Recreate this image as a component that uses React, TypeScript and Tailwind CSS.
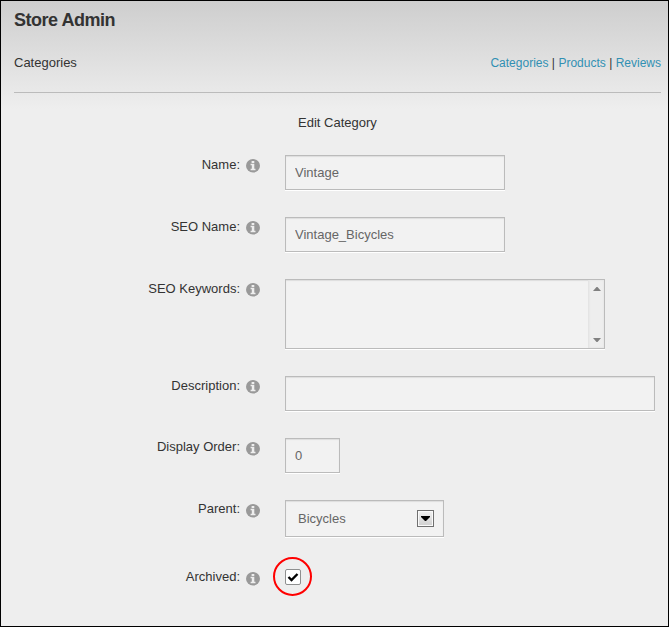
import type { ReactNode } from "react";

function InfoIcon() {
  return (
    <svg width="14" height="14" viewBox="0 0 14 14" className="block shrink-0">
      <ellipse cx="7" cy="6.8" rx="7" ry="6.7" fill="#999" />
      <path d="M5.6 1.9h2.7v2H5.6z M4.6 4.8h3.7v5h1.2v1.5H4.6V9.8h1.2V6.3H4.6z" fill="#eee" />
    </svg>
  );
}

type RowProps = { label: string; labelClass: string; rowClass: string; children: ReactNode };

function Row({ label, labelClass, rowClass, children }: RowProps) {
  return (
    <div className={`flex items-start ${rowClass}`}>
      <div className="flex w-[259px] justify-end">
        <span className={`mr-[6px] whitespace-nowrap leading-[16px] ${labelClass}`}>{label}</span>
        <div className="mt-[4px]">
          <InfoIcon />
        </div>
      </div>
      <div className="ml-[25px]">{children}</div>
    </div>
  );
}

const field =
  "block border border-[#bbb] bg-[#f2f2f2] text-[13px] text-[#666] outline-none shadow-[0_1px_0_#fff,inset_0_1px_1px_#ddd]";

export default function App() {
  return (
    <div className="h-[627px] w-[669px] overflow-hidden border border-black bg-[#eee] bg-[linear-gradient(to_bottom,#cecece_0px,#eee_108px)] font-['Liberation_Sans',Arial,sans-serif] text-[13px] text-[#333]">
      <header className="mr-[7px] ml-[13px] flex h-[92px] flex-col border-b border-[#bbb]">
        <h1 className="mt-[8px] text-[18px] leading-[22px] font-bold tracking-[-0.48px]">Store Admin</h1>
        <div className="mt-[24px] flex justify-between leading-[16px]">
          <span>Categories</span>
          <nav className="flex gap-[3.4px] text-[12px] text-[#3190b3]">
            <a>Categories</a>
            <span className="text-[#333]">|</span>
            <a>Products</a>
            <span className="text-[#333]">|</span>
            <a>Reviews</a>
          </nav>
        </div>
      </header>
      <main>
        <h2 className="mt-[22px] ml-[297px] leading-[16px]">Edit Category</h2>
        <Row label="Name:" labelClass="mt-[2px]" rowClass="mt-[24px] h-[62px]">
          <input className={`${field} h-[35px] w-[220px] px-[9px]`} defaultValue="Vintage" />
        </Row>
        <Row label="SEO Name:" labelClass="mt-[2px]" rowClass="h-[62px]">
          <input className={`${field} h-[35px] w-[220px] px-[9px]`} defaultValue="Vintage_Bicycles" />
        </Row>
        <Row label="SEO Keywords:" labelClass="mt-[2px]" rowClass="h-[97px]">
          <div className={`${field} flex h-[70px] w-[320px]`}>
            <textarea className="min-w-0 flex-1 resize-none overflow-hidden outline-none" />
            <div className="flex w-[16px] flex-col items-center justify-between border-l border-[#e4e4e4] bg-[#eee] pt-[7px] pb-[6px] shadow-[inset_0_0_2px_#ddd]">
              <svg width="8" height="4" viewBox="0 0 8 4" className="block">
                <path d="M3.5 0h1L8 4H0z" fill="#808080" />
              </svg>
              <svg width="8" height="4" viewBox="0 0 8 4" className="block">
                <path d="M0 0H8L4.5 4h-1z" fill="#808080" />
              </svg>
            </div>
          </div>
        </Row>
        <Row label="Description:" labelClass="mt-[2px]" rowClass="h-[62px]">
          <input className={`${field} h-[35px] w-[370px] px-[9px]`} />
        </Row>
        <Row label="Display Order:" labelClass="mt-[1px]" rowClass="h-[62px]">
          <input className={`${field} h-[35px] w-[55px] px-[9px]`} defaultValue="0" />
        </Row>
        <Row label="Parent:" labelClass="mt-[1px]" rowClass="h-[68px]">
          <div className={`${field} flex h-[37px] w-[159px] items-center justify-between pr-[9px] pl-[12px]`}>
            <span>Bicycles</span>
            <button className="flex h-[17px] w-[17px] items-center justify-center border border-[#707070] bg-linear-to-b from-[#f2f2f2] to-[#cfcfcf] shadow-[inset_0_0_0_1px_#fafafa]">
              <svg width="9" height="5" viewBox="0 0 9 5" className="block">
                <path d="M0 0H9V1L5 5H4L0 1z" fill="#000" />
              </svg>
            </button>
          </div>
        </Row>
        <Row label="Archived:" labelClass="mt-[1px]" rowClass="">
          <div className="relative mt-[1px] flex h-[16px] w-[16px] items-center justify-center rounded-[2px] border border-[#8e8f8f] bg-white">
            <svg width="12" height="10" viewBox="0 0 12 10" className="block">
              <path d="M1.5 5L4.5 8L10.5 2" fill="none" stroke="#000" strokeWidth="2.4" />
            </svg>
            <div className="absolute -top-[13px] -left-[13px] h-[39px] w-[39px] rounded-full border-2 border-[#f00]" />
          </div>
        </Row>
      </main>
    </div>
  );
}
